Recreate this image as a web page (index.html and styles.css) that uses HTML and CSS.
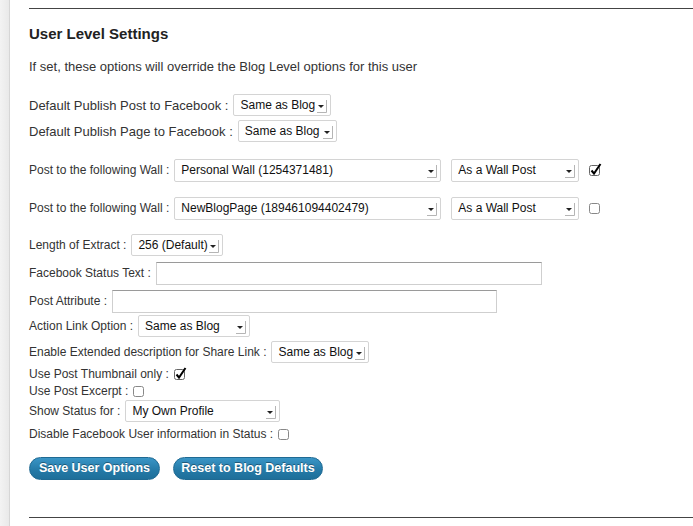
FILE: index.html
```html
<!DOCTYPE html>
<html>
<head>
<meta charset="utf-8">
<link rel="stylesheet" href="styles.css">
</head>
<body>
<div class="page">
  <div class="strip"></div>
  <div class="main">
    <div class="rule top"></div>
    <h2 class="title">User Level Settings</h2>
    <p class="intro">If set, these options will override the Blog Level options for this user</p>

    <div class="row r1 big"><span class="lbl">Default Publish Post to Facebook :</span>
      <span class="sel w98"><span class="val">Same as Blog</span><svg class="arr" width="12" height="16" viewBox="0 0 12 16"><polygon points="2,7 8,7 5,10" fill="#222"/><path d="M10.5 2 V14.5 H1" fill="none" stroke="#b5b5b5"/></svg></span></div>
    <div class="row r2 big"><span class="lbl">Default Publish Page to Facebook :</span>
      <span class="sel w99"><span class="val">Same as Blog</span><svg class="arr" width="12" height="16" viewBox="0 0 12 16"><polygon points="2,7 8,7 5,10" fill="#222"/><path d="M10.5 2 V14.5 H1" fill="none" stroke="#b5b5b5"/></svg></span></div>

    <div class="row r3"><span class="lbl">Post to the following Wall :</span>
      <span class="sel wwall tall"><span class="val">Personal Wall (1254371481)</span><svg class="arr" width="12" height="16" viewBox="0 0 12 16"><polygon points="2,7 8,7 5,10" fill="#222"/><path d="M10.5 2 V14.5 H1" fill="none" stroke="#b5b5b5"/></svg></span>
      <span class="sel wtype tall"><span class="val">As a Wall Post</span><svg class="arr" width="12" height="16" viewBox="0 0 12 16"><polygon points="2,7 8,7 5,10" fill="#222"/><path d="M10.5 2 V14.5 H1" fill="none" stroke="#b5b5b5"/></svg></span>
      <svg class="cb cbwall" width="13" height="14" viewBox="0 0 13 14"><rect x="0.5" y="2.5" width="10" height="10" rx="2" fill="#fff" stroke="#666"/><path d="M2.5 7.5 L5 10.5 L11.5 1" fill="none" stroke="#000" stroke-width="2"/></svg></div>
    <div class="row r4"><span class="lbl">Post to the following Wall :</span>
      <span class="sel wwall tall"><span class="val">NewBlogPage (189461094402479)</span><svg class="arr" width="12" height="16" viewBox="0 0 12 16"><polygon points="2,7 8,7 5,10" fill="#222"/><path d="M10.5 2 V14.5 H1" fill="none" stroke="#b5b5b5"/></svg></span>
      <span class="sel wtype tall"><span class="val">As a Wall Post</span><svg class="arr" width="12" height="16" viewBox="0 0 12 16"><polygon points="2,7 8,7 5,10" fill="#222"/><path d="M10.5 2 V14.5 H1" fill="none" stroke="#b5b5b5"/></svg></span>
      <svg class="cb cbwall" width="13" height="14" viewBox="0 0 13 14"><rect x="0.5" y="2.5" width="10" height="10" rx="2" fill="#fff" stroke="#888"/></svg></div>

    <div class="row r5"><span class="lbl">Length of Extract :</span>
      <span class="sel w92"><span class="val">256 (Default)</span><svg class="arr" width="12" height="16" viewBox="0 0 12 16"><polygon points="2,7 8,7 5,10" fill="#222"/><path d="M10.5 2 V14.5 H1" fill="none" stroke="#b5b5b5"/></svg></span></div>
    <div class="row r6"><span class="lbl">Facebook Status Text :</span>
      <span class="inp w386"></span></div>
    <div class="row r7"><span class="lbl">Post Attribute :</span>
      <span class="inp w385"></span></div>
    <div class="row r8"><span class="lbl">Action Link Option :</span>
      <span class="sel w112"><span class="val">Same as Blog</span><svg class="arr" width="12" height="16" viewBox="0 0 12 16"><polygon points="2,7 8,7 5,10" fill="#222"/><path d="M10.5 2 V14.5 H1" fill="none" stroke="#b5b5b5"/></svg></span></div>
    <div class="row r9"><span class="lbl">Enable Extended description for Share Link :</span>
      <span class="sel w98"><span class="val">Same as Blog</span><svg class="arr" width="12" height="16" viewBox="0 0 12 16"><polygon points="2,7 8,7 5,10" fill="#222"/><path d="M10.5 2 V14.5 H1" fill="none" stroke="#b5b5b5"/></svg></span></div>
    <div class="row r10"><span class="lbl">Use Post Thumbnail only :</span>
      <svg class="cb" width="13" height="14" viewBox="0 0 13 14"><rect x="0.5" y="2.5" width="10" height="10" rx="2" fill="#fff" stroke="#666"/><path d="M2.5 7.5 L5 10.5 L11.5 1" fill="none" stroke="#000" stroke-width="2"/></svg></div>
    <div class="row r11"><span class="lbl">Use Post Excerpt :</span>
      <svg class="cb" width="13" height="14" viewBox="0 0 13 14"><rect x="0.5" y="2.5" width="10" height="10" rx="2" fill="#fff" stroke="#888"/></svg></div>
    <div class="row r12"><span class="lbl">Show Status for :</span>
      <span class="sel w155"><span class="val">My Own Profile</span><svg class="arr" width="12" height="16" viewBox="0 0 12 16"><polygon points="2,7 8,7 5,10" fill="#222"/><path d="M10.5 2 V14.5 H1" fill="none" stroke="#b5b5b5"/></svg></span></div>
    <div class="row r13"><span class="lbl">Disable Facebook User information in Status :</span>
      <svg class="cb" width="13" height="14" viewBox="0 0 13 14"><rect x="0.5" y="2.5" width="10" height="10" rx="2" fill="#fff" stroke="#888"/></svg></div>

    <div class="buttons">
      <span class="btn b1">Save User Options</span>
      <span class="btn b2">Reset to Blog Defaults</span>
    </div>
    <div class="rule bottom"></div>
  </div>
</div>
</body>
</html>
```

FILE: styles.css
```css
html, body {
  margin: 0;
  padding: 0;
  background: #fff;
}
body {
  font-family: "Liberation Sans", Arial, Helvetica, sans-serif;
  font-size: 12px;
  color: #333;
}
.page {
  display: flex;
  width: 693px;
  height: 526px;
  overflow: hidden;
}
.strip {
  width: 9px;
  flex: none;
  background: linear-gradient(to right, #f3f3f3, #e9e9e9);
  border-right: 1px solid #d6d6d6;
}
.main {
  flex: 1;
  padding-left: 19px;
  padding-top: 8px;
}
.rule {
  height: 1px;
  background: #444;
}
.title {
  margin: 15px 0 0;
  height: 20px;
  line-height: 20px;
  font-size: 15px;
  font-weight: bold;
  color: #222;
}
.intro {
  margin: 15px 0 0;
  height: 16px;
  line-height: 16px;
  font-size: 13px;
  color: #333;
}
.row {
  display: flex;
  align-items: center;
  height: 22px;
  white-space: nowrap;
  font-size: 12px;
}
.row.big { font-size: 13px; }
.lbl {
  margin-right: 5px;
}
.r1 { margin-top: 19px; }
.r2 { margin-top: 4px; }
.r3 { margin-top: 16px; height: 24px; }
.r4 { margin-top: 14px; height: 24px; }
.r5 { margin-top: 14px; }
.r6 { margin-top: 5px; height: 24px; }
.r7 { margin-top: 4px; height: 24px; }
.r8 { margin-top: 2px; }
.r9 { margin-top: 4px; }
.r10 { margin-top: 2px; height: 18px; }
.r11 { margin-top: 0; height: 16px; }
.r12 { margin-top: 1px; }
.r13 { margin-top: 3px; height: 18px; }

.sel {
  display: flex;
  align-items: center;
  box-sizing: border-box;
  height: 22px;
  border: 1px solid #d4d4d4;
  border-radius: 2px;
  background: #fff;
  padding-left: 6px;
  padding-right: 2px;
  color: #111;
  font-size: 12px;
}
.sel.tall { height: 23px; }
.sel .val { flex: 1; overflow: hidden; }
.sel .arr { flex: none; margin-top: 1px; }
.w98 { width: 98px; }
.w99 { width: 99px; }
.w92 { width: 92px; }
.w112 { width: 112px; }
.w155 { width: 155px; }
.wwall { width: 267px; }
.wtype { width: 128px; margin-left: 10px; }
.cbwall { margin-left: 10px; }
.cb { flex: none; }

.inp {
  box-sizing: border-box;
  height: 23px;
  border: 1px solid #cfcfcf;
  border-top-color: #9a9a9a;
  background: #fff;
}
.w386 { width: 386px; }
.w385 { width: 385px; }

.buttons {
  display: flex;
  gap: 13px;
  margin-top: 14px;
}
.btn {
  box-sizing: border-box;
  height: 23px;
  line-height: 21px;
  border: 1px solid #1f6a93;
  border-radius: 12px;
  background: linear-gradient(to bottom, #3a95c6, #2479a6 60%, #1e6f9a);
  color: #fff;
  font-weight: bold;
  font-size: 12.5px;
  text-shadow: 0 -1px 0 rgba(0,0,0,0.35);
  white-space: nowrap;
  text-align: center;
}
.b1 { width: 131px; }
.b2 { width: 150px; }
.bottom {
  margin-top: 37px;
}
```
